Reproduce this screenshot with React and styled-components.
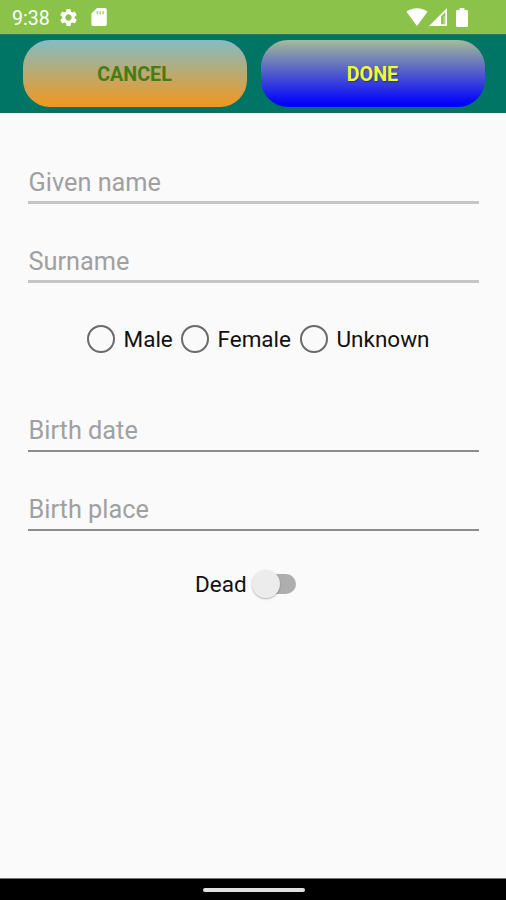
import React from "react";
import styled, { createGlobalStyle } from "styled-components";

const GlobalStyle = createGlobalStyle`
  * { box-sizing: border-box; }
  body { margin: 0; background: #fafafa; }
`;

const Screen = styled.div`
  display: flex;
  flex-direction: column;
  width: 506px;
  height: 900px;
  overflow: hidden;
  background: #fafafa;
  font-family: Roboto, "Liberation Sans", sans-serif;
`;

const StatusBar = styled.header`
  display: flex;
  align-items: center;
  flex: none;
  height: 34px;
  padding: 0 38px 0 12px;
  background: #8bc34a;
  color: #fff;
`;

const Clock = styled.span`
  width: 46px;
  font-size: 19.5px;
  line-height: 34px;
  padding-top: 3px;
  white-space: nowrap;
`;

const StatusGroup = styled.div`
  display: flex;
  align-items: center;
  gap: ${(p) => p.$gap}px;
  margin-left: ${(p) => p.$push || 0};

  svg { display: block; fill: currentColor; }
`;

const Toolbar = styled.div`
  display: flex;
  flex: none;
  gap: 14px;
  height: 79px;
  padding: 4.5px 21.5px 5px 22.5px;
  background: #007465;
  border-top: 1px solid #257b5c;
  border-bottom: 1px solid #17695e;
`;

const ActionButton = styled.button`
  flex: 1;
  border: 0;
  padding: 2px 0 0;
  border-radius: 27px;
  background: linear-gradient(${(p) => p.$from}, ${(p) => p.$to} 96%);
  color: ${(p) => p.$ink};
  font: 700 19.7px Roboto, "Liberation Sans", sans-serif;
  text-shadow: ${(p) => p.$shadow || "none"};
`;

const Form = styled.main`
  display: flex;
  flex-direction: column;
  flex: 1;
  padding: 44px 27px 0 28px;
`;

const Field = styled.input`
  display: block;
  width: 100%;
  height: 47px;
  margin: 0 0 ${(p) => p.$after}px;
  padding: ${(p) => (p.$strong ? 6 : 7)}px 0 0 0.5px;
  border: 0;
  border-bottom: ${(p) => (p.$strong ? "2px solid #8c8c8c" : "3px solid #c5c5c5")};
  border-radius: 0;
  outline: none;
  background: transparent;
  font: 400 25.3px Roboto, "Liberation Sans", sans-serif;

  &::placeholder { color: #a0a0a0; opacity: 1; }
`;

const RadioRow = styled.div`
  display: flex;
  align-items: center;
  height: 32px;
  margin: 0 0 50px 59px;
`;

const RadioOption = styled.label`
  display: flex;
  align-items: center;
  width: ${(p) => p.$width}px;
  color: #111;
  font-size: 22.5px;
  line-height: 32px;
  white-space: nowrap;
`;

const Radio = styled.input`
  appearance: none;
  flex: none;
  width: 28px;
  height: 28px;
  margin: 0 8.5px 0 0;
  border: 2px solid #6a6a6a;
  border-radius: 50%;
`;

const SwitchRow = styled.label`
  display: flex;
  align-items: center;
  height: 32px;
  margin-left: 167px;
  color: #111;
  font-size: 22.5px;
`;

const SwitchTrack = styled.span`
  display: flex;
  align-items: center;
  width: 39px;
  height: 20px;
  margin-left: 10.5px;
  border-radius: 10px;
  background: #aeaeae;
`;

const SwitchThumb = styled.span`
  flex: none;
  width: 28px;
  height: 28px;
  margin-left: -5.5px;
  border-radius: 50%;
  background: #ececec;
  box-shadow: 0 1px 2px rgba(0, 0, 0, 0.28);
`;

const NavigationBar = styled.footer`
  display: flex;
  justify-content: center;
  flex: none;
  height: 22px;
  padding-top: 9px;
  border-top: 1px solid #777;
  background: #000;
`;

const HomeHandle = styled.span`
  width: 102px;
  height: 4px;
  margin-left: 1px;
  border-radius: 2px;
  background: #e0e0e0;
`;

const GearIcon = () => (
  <svg width="21" height="21" viewBox="0 0 24 24">
    <path d="M19.14 12.94c.04-.3.06-.61.06-.94 0-.32-.02-.64-.07-.94l2.03-1.58a.49.49 0 0 0 .12-.61l-1.92-3.32a.488.488 0 0 0-.59-.22l-2.39.96c-.5-.38-1.03-.7-1.62-.94l-.36-2.54a.484.484 0 0 0-.48-.41h-3.84c-.24 0-.43.17-.47.41l-.36 2.54c-.59.24-1.13.57-1.62.94l-2.39-.96c-.22-.08-.47 0-.59.22L2.74 8.87c-.12.21-.08.47.12.61l2.03 1.58c-.05.3-.09.63-.09.94s.02.64.07.94l-2.03 1.58a.49.49 0 0 0-.12.61l1.92 3.32c.12.22.37.29.59.22l2.39-.96c.5.38 1.03.7 1.62.94l.36 2.54c.05.24.24.41.48.41h3.84c.24 0 .44-.17.47-.41l.36-2.54c.59-.24 1.13-.56 1.62-.94l2.39.96c.22.08.47 0 .59-.22l1.92-3.32c.12-.22.07-.47-.12-.61l-2.01-1.58zM12 15.6c-1.98 0-3.6-1.62-3.6-3.6s1.62-3.6 3.6-3.6 3.6 1.62 3.6 3.6-1.62 3.6-3.6 3.6z" />
  </svg>
);

const CardIcon = () => (
  <svg width="16" height="18" viewBox="0 0 16 18">
    <path d="M6 0h8a1.8 1.8 0 0 1 1.8 1.8v14.4A1.8 1.8 0 0 1 14 18H2.2a1.8 1.8 0 0 1-1.8-1.8V5.5z" />
    <path d="M5.6 3.2h1.7v3H5.6zM8.5 3.2h1.6v3H8.5zM11.3 3.2h1.6v3h-1.6z" fill="#a9d27b" />
  </svg>
);

const WifiIcon = () => (
  <svg width="22" height="18" viewBox="0 0 22 18">
    <path d="M0.5 3.8C6.2-1 15.8-1 21.5 3.8L11 18z" />
  </svg>
);

const SignalIcon = () => (
  <svg width="18" height="18" viewBox="0 0 18 18">
    <path fillRule="evenodd" d="M18 0v18H0zM16.3 4.2l-4.2 4.2v7.9h4.2z" />
    <path d="M14.2 8h2.1v8.3h-2.1z" opacity=".3" />
  </svg>
);

const BatteryIcon = () => (
  <svg width="12" height="19" viewBox="0 0 12 19">
    <path d="M3.6 0h4.8v1.9h2a1.5 1.5 0 0 1 1.6 1.5v14a1.6 1.6 0 0 1-1.6 1.6H1.6A1.6 1.6 0 0 1 0 17.4v-14a1.5 1.5 0 0 1 1.6-1.5h2z" />
  </svg>
);

const radioOptions = [
  { name: "Male", width: 94 },
  { name: "Female", width: 119 },
  { name: "Unknown", width: 135 },
];

export default function App() {
  return (
    <>
      <GlobalStyle />
      <Screen>
        <StatusBar>
          <Clock>9:38</Clock>
          <StatusGroup $gap={12}>
            <GearIcon />
            <CardIcon />
          </StatusGroup>
          <StatusGroup $gap={1} $push="auto">
            <WifiIcon />
            <StatusGroup $gap={9}>
              <SignalIcon />
              <BatteryIcon />
            </StatusGroup>
          </StatusGroup>
        </StatusBar>
        <Toolbar>
          <ActionButton $from="#84bcc4" $to="#ee9824" $ink="#467c12">CANCEL</ActionButton>
          <ActionButton $from="#a5bc98" $to="#0000ff" $ink="#f2fb35" $shadow="1px 1px 1px rgba(20, 20, 90, 0.5)">
            DONE
          </ActionButton>
        </Toolbar>
        <Form>
          <Field placeholder="Given name" $after={32} />
          <Field placeholder="Surname" $after={40} />
          <RadioRow>
            {radioOptions.map((o) => (
              <RadioOption key={o.name} $width={o.width}>
                <Radio type="radio" name="gender" />
                {o.name}
              </RadioOption>
            ))}
          </RadioRow>
          <Field placeholder="Birth date" $after={32} $strong />
          <Field placeholder="Birth place" $after={37} $strong />
          <SwitchRow>
            Dead
            <SwitchTrack>
              <SwitchThumb />
            </SwitchTrack>
          </SwitchRow>
        </Form>
        <NavigationBar>
          <HomeHandle />
        </NavigationBar>
      </Screen>
    </>
  );
}
